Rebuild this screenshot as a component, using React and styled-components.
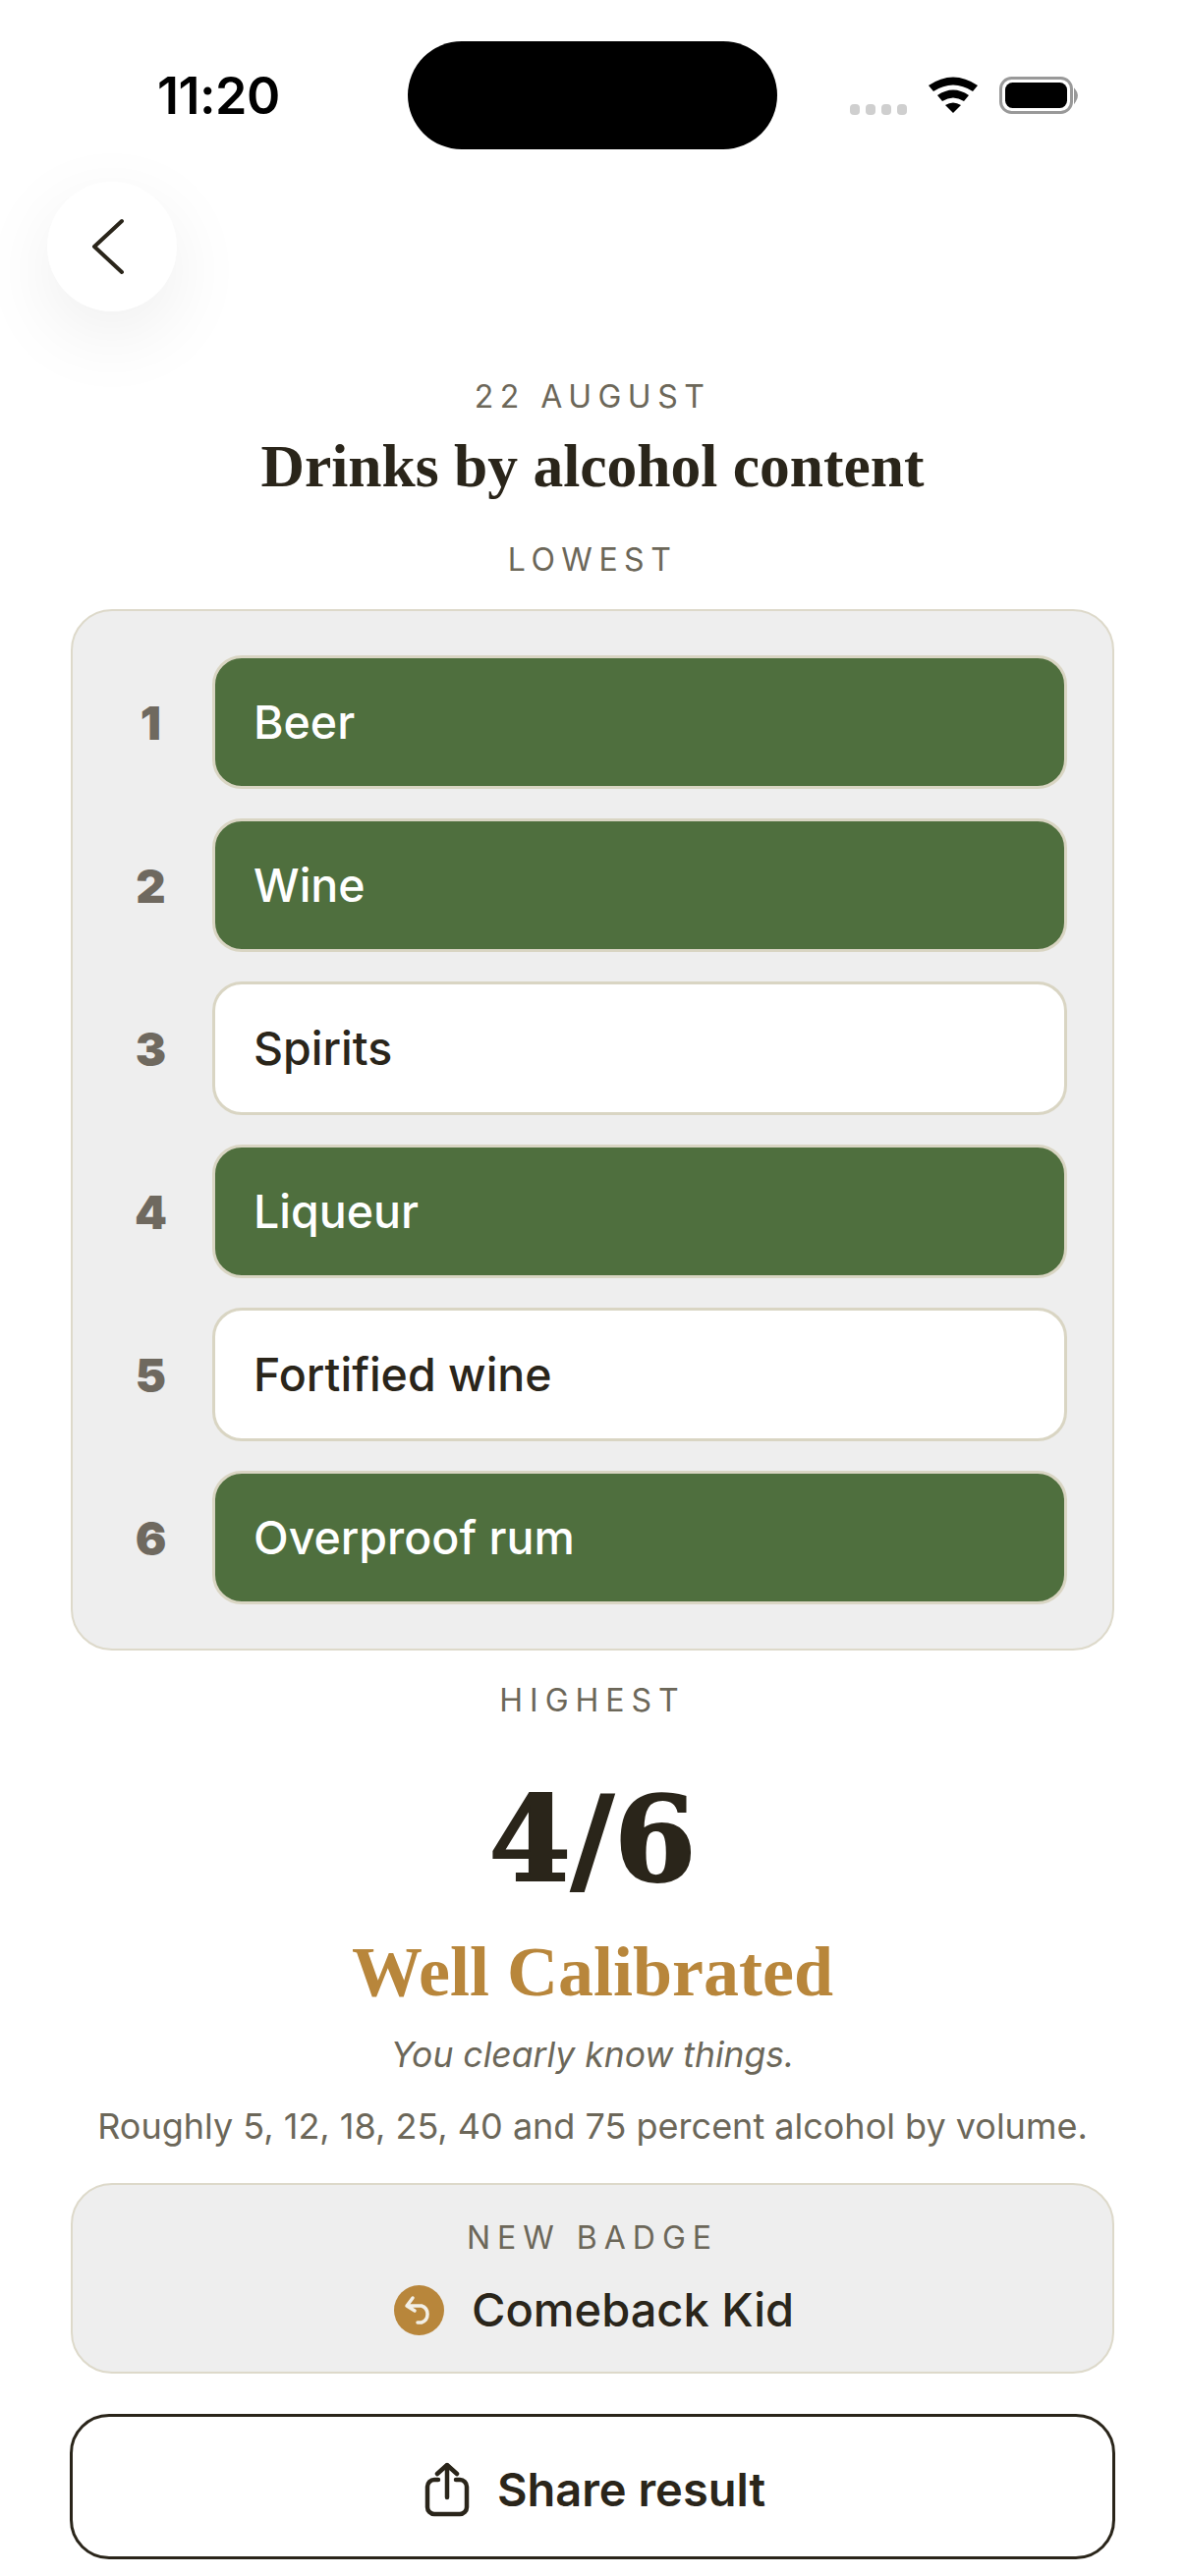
import React from "react";
import styled, { createGlobalStyle } from "styled-components";

const Global = createGlobalStyle`
  html, body { margin: 0; padding: 0; background: #fff; }
  * { box-sizing: border-box; }
  body { font-family: Inter, "Liberation Sans", sans-serif; color: #2a251a; }
`;

const Page = styled.div`
  width: 1206px;
  height: 2622px;
  overflow: hidden;
  background: #fff;
`;

const StatusBar = styled.div`
  height: 185px;
  padding-top: 42px;
  display: flex;
  align-items: flex-start;
`;

const Time = styled.div`
  width: 415px;
  padding: 29px 0 0 160px;
  font-size: 52px;
  line-height: 54px;
  font-weight: 600;
  color: #000;
  letter-spacing: -0.5px;
`;

const Island = styled.div`
  width: 376px;
  height: 110px;
  border-radius: 55px;
  background: #000;
`;

const StatusIcons = styled.div`
  display: flex;
  align-items: flex-start;
  padding: 36px 0 0 74px;
`;

const BackButton = styled.div`
  width: 132px;
  height: 132px;
  margin-left: 48px;
  padding-right: 6px;
  border-radius: 50%;
  background: #fff;
  box-shadow: 0 24px 80px rgba(0, 0, 0, 0.07);
  display: flex;
  align-items: center;
  justify-content: center;
`;

const Content = styled.div`
  padding: 0 72px;
  display: flex;
  flex-direction: column;
  align-items: stretch;
`;

const Eyebrow = styled.div`
  text-align: center;
  font-size: 32px;
  line-height: 40px;
  letter-spacing: ${(p) => p.$spacing || "6.5px"};
  color: #6c6759;
  margin-top: ${(p) => p.$top || 0}px;
`;

const Title = styled.h1`
  margin: 18px 0 0;
  text-align: center;
  font-family: "Liberation Serif", serif;
  font-weight: 700;
  font-size: 61.5px;
  line-height: 64px;
  color: #2a251a;
`;

const Card = styled.div`
  background: #eeeeee;
  border: 2px solid #ddd9ca;
  border-radius: 42px;
`;

const RankCard = styled(Card)`
  margin-top: 30px;
  height: 1060px;
  padding: 45px 46px 45px 48px;
  display: flex;
  flex-direction: column;
  gap: 30px;
`;

const Row = styled.div`
  display: flex;
  align-items: center;
  height: 136px;
`;

const Rank = styled.div`
  width: 63px;
  margin-right: 31px;
  text-align: center;
  font-size: 47px;
  font-weight: 900;
  color: #6f695f;
`;

const Item = styled.div`
  flex: 1;
  height: 136px;
  padding-left: 39px;
  display: flex;
  align-items: center;
  border: 3px solid #d9d5c3;
  border-radius: 30px;
  font-size: 46.5px;
  font-weight: 450;
  background: ${(p) => (p.$correct ? "#4f6f3e" : "#fff")};
  color: ${(p) => (p.$correct ? "#fff" : "#2a251a")};
`;

const Score = styled.div`
  margin-top: 56px;
  text-align: center;
  font-family: "DejaVu Serif", serif;
  font-weight: 700;
  font-size: 120px;
  line-height: 130px;
  color: #2a251a;
  -webkit-text-stroke: 2px #2a251a;
`;

const Verdict = styled.div`
  margin-top: 32px;
  text-align: center;
  font-family: "Liberation Serif", serif;
  font-weight: 700;
  font-size: 72px;
  line-height: 76px;
  color: #b8863b;
`;

const Quip = styled.div`
  margin-top: 25px;
  text-align: center;
  font-style: italic;
  font-size: 35.5px;
  line-height: 44px;
  color: #6c6759;
`;

const Note = styled.div`
  margin-top: 28px;
  text-align: center;
  font-size: 36px;
  line-height: 44px;
  color: #6c6759;
`;

const BadgeCard = styled(Card)`
  margin-top: 36px;
  height: 194px;
  padding-top: 34px;
`;

const BadgeRow = styled.div`
  margin-top: 23px;
  padding-left: 3px;
  display: flex;
  align-items: center;
  justify-content: center;
  gap: 28px;
`;

const BadgeName = styled.div`
  font-size: 47px;
  line-height: 60px;
  font-weight: 500;
`;

const ShareButton = styled.div`
  margin: 41px -1px 0;
  height: 148px;
  padding: 5px 0 0 5px;
  border: 3px solid #2a251a;
  border-radius: 40px;
  display: flex;
  align-items: center;
  justify-content: center;
  gap: 28px;
  font-size: 47px;
  font-weight: 600;
  background: #fff;
`;

const items = [
  { name: "Beer", correct: true },
  { name: "Wine", correct: true },
  { name: "Spirits", correct: false },
  { name: "Liqueur", correct: true },
  { name: "Fortified wine", correct: false },
  { name: "Overproof rum", correct: true },
];

const StatusGlyphs = () => (
  <svg width="240" height="50" viewBox="0 0 240 50">
    <g fill="#cfcfcf">
      <rect x="0" y="28" width="10" height="11" rx="4" />
      <rect x="16" y="28" width="10" height="11" rx="4" />
      <rect x="32" y="28" width="10" height="11" rx="4" />
      <rect x="48" y="28" width="10" height="11" rx="4" />
    </g>
    <path
      d="M80 9 Q105 -8 130 9 L125 15 Q105 2 85 15 Z M89 19 Q105 8 121 19 L116 25 Q105 18 94 25 Z M97 29 Q105 24 113 29 L105 37 Z"
      fill="#000"
    />
    <rect x="153.5" y="1.5" width="72" height="35" rx="11" fill="none" stroke="#999" strokeWidth="3" />
    <rect x="158" y="6" width="63" height="26" rx="7.5" fill="#000" />
    <path d="M229 14 Q233 19 229 25 Z" fill="#999" stroke="#999" strokeWidth="2" />
  </svg>
);

const App = () => (
  <Page>
    <Global />
    <StatusBar>
      <Time>11:20</Time>
      <Island />
      <StatusIcons>
        <StatusGlyphs />
      </StatusIcons>
    </StatusBar>
    <BackButton>
      <svg width="40" height="60" viewBox="0 0 40 60" fill="none" stroke="#2a251a" strokeWidth="4" strokeLinecap="round" strokeLinejoin="round">
        <path d="M33 4 L5 30 L33 56" />
      </svg>
    </BackButton>
    <Content>
      <Eyebrow $top={67}>22 AUGUST</Eyebrow>
      <Title>Drinks by alcohol content</Title>
      <Eyebrow $top={44}>LOWEST</Eyebrow>
      <RankCard>
        {items.map((item, i) => (
          <Row key={item.name}>
            <Rank>{i + 1}</Rank>
            <Item $correct={item.correct}>{item.name}</Item>
          </Row>
        ))}
      </RankCard>
      <Eyebrow $top={31} $spacing="7px">HIGHEST</Eyebrow>
      <Score>4/6</Score>
      <Verdict>Well Calibrated</Verdict>
      <Quip>You clearly know things.</Quip>
      <Note>Roughly 5, 12, 18, 25, 40 and 75 percent alcohol by volume.</Note>
      <BadgeCard>
        <Eyebrow $spacing="7px">NEW BADGE</Eyebrow>
        <BadgeRow>
          <svg width="51" height="51" viewBox="0 0 51 51" fill="none">
            <circle cx="25.5" cy="25.5" r="25.5" fill="#b8863b" />
            <path d="M19 13 L13 21 L21 26 M13 21 H28 A9 9 0 0 1 28 38 H24" stroke="#f2efe6" strokeWidth="3.5" strokeLinecap="round" strokeLinejoin="round" />
          </svg>
          <BadgeName>Comeback Kid</BadgeName>
        </BadgeRow>
      </BadgeCard>
      <ShareButton>
        <svg width="46" height="56" viewBox="0 0 46 56" fill="none" stroke="#2a251a" strokeWidth="4.5" strokeLinecap="round" strokeLinejoin="round">
          <path d="M14 18 H10 A7 7 0 0 0 3 25 V46 A7 7 0 0 0 10 53 H36 A7 7 0 0 0 43 46 V25 A7 7 0 0 0 36 18 H32" />
          <path d="M23 36 V3 M13 12 L23 3 L33 12" />
        </svg>
        Share result
      </ShareButton>
    </Content>
  </Page>
);

export default App;
